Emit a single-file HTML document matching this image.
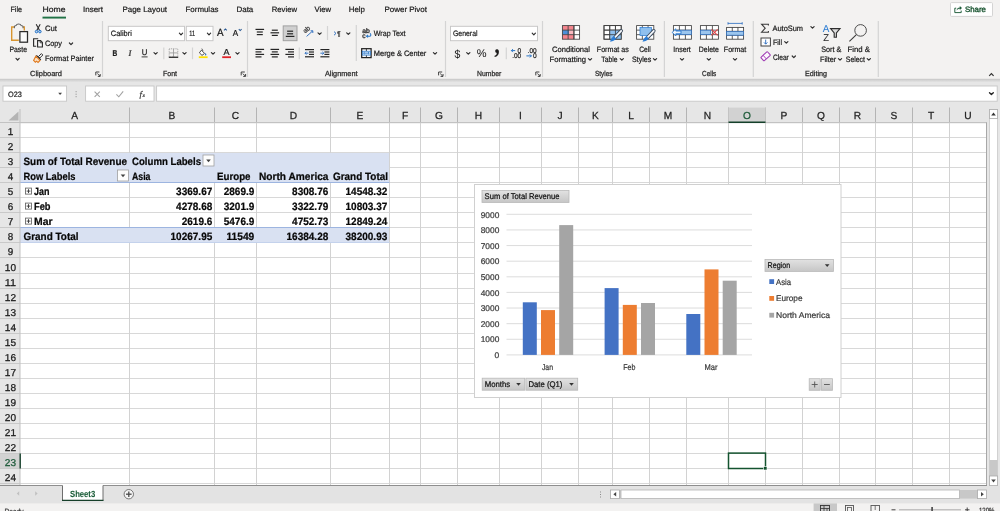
<!DOCTYPE html>
<html lang="en"><head><meta charset="utf-8"><title>Excel - PivotChart</title>
<style>
html,body{margin:0;padding:0;background:#fff;overflow:hidden}
svg{display:block;will-change:transform;font-family:'Liberation Sans', sans-serif;}
text{white-space:pre}
</style></head><body>
<svg width="1000" height="511" viewBox="0 0 1000 511" font-family="'Liberation Sans', sans-serif" text-rendering="geometricPrecision">
<rect x="0" y="0" width="1000" height="511" fill="#ffffff"/>
<rect x="0" y="0" width="1000" height="79.5" fill="#f3f2f1"/>
<rect x="0" y="79.5" width="1000" height="44" fill="#e6e6e6"/>
<linearGradient id="shd" x1="0" y1="0" x2="0" y2="1"><stop offset="0" stop-color="#c4c4c4"/><stop offset="0.35" stop-color="#d2d2d2"/><stop offset="1" stop-color="#e6e6e6"/></linearGradient>
<rect x="0" y="78.8" width="1000" height="3.6" fill="url(#shd)"/>
<rect x="0" y="107" width="987" height="15.5" fill="#e6e6e6"/>
<rect x="0" y="122.5" width="20" height="363.0" fill="#e6e6e6"/>
<rect x="20" y="152.5" width="369.5" height="30.0" fill="#d9e1f2"/>
<rect x="20" y="227.5" width="369.5" height="15.0" fill="#d9e1f2"/>
<line x1="20" y1="137.5" x2="986.5" y2="137.5" stroke="#d8d8d8" stroke-width="1.0" />
<line x1="0" y1="137.5" x2="20" y2="137.5" stroke="#c9c9c9" stroke-width="1.0" />
<line x1="20" y1="152.5" x2="986.5" y2="152.5" stroke="#d8d8d8" stroke-width="1.0" />
<line x1="0" y1="152.5" x2="20" y2="152.5" stroke="#c9c9c9" stroke-width="1.0" />
<line x1="389.5" y1="167.5" x2="986.5" y2="167.5" stroke="#d8d8d8" stroke-width="1.0" />
<line x1="0" y1="167.5" x2="20" y2="167.5" stroke="#c9c9c9" stroke-width="1.0" />
<line x1="20" y1="182.5" x2="986.5" y2="182.5" stroke="#d8d8d8" stroke-width="1.0" />
<line x1="0" y1="182.5" x2="20" y2="182.5" stroke="#c9c9c9" stroke-width="1.0" />
<line x1="20" y1="197.5" x2="986.5" y2="197.5" stroke="#d8d8d8" stroke-width="1.0" />
<line x1="0" y1="197.5" x2="20" y2="197.5" stroke="#c9c9c9" stroke-width="1.0" />
<line x1="20" y1="212.5" x2="986.5" y2="212.5" stroke="#d8d8d8" stroke-width="1.0" />
<line x1="0" y1="212.5" x2="20" y2="212.5" stroke="#c9c9c9" stroke-width="1.0" />
<line x1="20" y1="227.5" x2="986.5" y2="227.5" stroke="#d8d8d8" stroke-width="1.0" />
<line x1="0" y1="227.5" x2="20" y2="227.5" stroke="#c9c9c9" stroke-width="1.0" />
<line x1="20" y1="242.5" x2="986.5" y2="242.5" stroke="#d8d8d8" stroke-width="1.0" />
<line x1="0" y1="242.5" x2="20" y2="242.5" stroke="#c9c9c9" stroke-width="1.0" />
<line x1="20" y1="257.5" x2="986.5" y2="257.5" stroke="#d8d8d8" stroke-width="1.0" />
<line x1="0" y1="257.5" x2="20" y2="257.5" stroke="#c9c9c9" stroke-width="1.0" />
<line x1="20" y1="273.5" x2="986.5" y2="273.5" stroke="#d8d8d8" stroke-width="1.0" />
<line x1="0" y1="273.5" x2="20" y2="273.5" stroke="#c9c9c9" stroke-width="1.0" />
<line x1="20" y1="288.5" x2="986.5" y2="288.5" stroke="#d8d8d8" stroke-width="1.0" />
<line x1="0" y1="288.5" x2="20" y2="288.5" stroke="#c9c9c9" stroke-width="1.0" />
<line x1="20" y1="303.5" x2="986.5" y2="303.5" stroke="#d8d8d8" stroke-width="1.0" />
<line x1="0" y1="303.5" x2="20" y2="303.5" stroke="#c9c9c9" stroke-width="1.0" />
<line x1="20" y1="318.5" x2="986.5" y2="318.5" stroke="#d8d8d8" stroke-width="1.0" />
<line x1="0" y1="318.5" x2="20" y2="318.5" stroke="#c9c9c9" stroke-width="1.0" />
<line x1="20" y1="333.5" x2="986.5" y2="333.5" stroke="#d8d8d8" stroke-width="1.0" />
<line x1="0" y1="333.5" x2="20" y2="333.5" stroke="#c9c9c9" stroke-width="1.0" />
<line x1="20" y1="348.5" x2="986.5" y2="348.5" stroke="#d8d8d8" stroke-width="1.0" />
<line x1="0" y1="348.5" x2="20" y2="348.5" stroke="#c9c9c9" stroke-width="1.0" />
<line x1="20" y1="363.5" x2="986.5" y2="363.5" stroke="#d8d8d8" stroke-width="1.0" />
<line x1="0" y1="363.5" x2="20" y2="363.5" stroke="#c9c9c9" stroke-width="1.0" />
<line x1="20" y1="378.5" x2="986.5" y2="378.5" stroke="#d8d8d8" stroke-width="1.0" />
<line x1="0" y1="378.5" x2="20" y2="378.5" stroke="#c9c9c9" stroke-width="1.0" />
<line x1="20" y1="393.5" x2="986.5" y2="393.5" stroke="#d8d8d8" stroke-width="1.0" />
<line x1="0" y1="393.5" x2="20" y2="393.5" stroke="#c9c9c9" stroke-width="1.0" />
<line x1="20" y1="408.5" x2="986.5" y2="408.5" stroke="#d8d8d8" stroke-width="1.0" />
<line x1="0" y1="408.5" x2="20" y2="408.5" stroke="#c9c9c9" stroke-width="1.0" />
<line x1="20" y1="423.5" x2="986.5" y2="423.5" stroke="#d8d8d8" stroke-width="1.0" />
<line x1="0" y1="423.5" x2="20" y2="423.5" stroke="#c9c9c9" stroke-width="1.0" />
<line x1="20" y1="438.5" x2="986.5" y2="438.5" stroke="#d8d8d8" stroke-width="1.0" />
<line x1="0" y1="438.5" x2="20" y2="438.5" stroke="#c9c9c9" stroke-width="1.0" />
<line x1="20" y1="453.5" x2="986.5" y2="453.5" stroke="#d8d8d8" stroke-width="1.0" />
<line x1="0" y1="453.5" x2="20" y2="453.5" stroke="#c9c9c9" stroke-width="1.0" />
<line x1="20" y1="468.5" x2="986.5" y2="468.5" stroke="#d8d8d8" stroke-width="1.0" />
<line x1="0" y1="468.5" x2="20" y2="468.5" stroke="#c9c9c9" stroke-width="1.0" />
<line x1="20" y1="483.5" x2="986.5" y2="483.5" stroke="#d8d8d8" stroke-width="1.0" />
<line x1="0" y1="483.5" x2="20" y2="483.5" stroke="#c9c9c9" stroke-width="1.0" />
<line x1="129.5" y1="122.5" x2="129.5" y2="485.5" stroke="#d2d2d2" stroke-width="1.0" />
<line x1="214.5" y1="122.5" x2="214.5" y2="485.5" stroke="#d2d2d2" stroke-width="1.0" />
<line x1="256.5" y1="122.5" x2="256.5" y2="485.5" stroke="#d2d2d2" stroke-width="1.0" />
<line x1="330.5" y1="122.5" x2="330.5" y2="485.5" stroke="#d2d2d2" stroke-width="1.0" />
<line x1="389.5" y1="122.5" x2="389.5" y2="485.5" stroke="#d2d2d2" stroke-width="1.0" />
<line x1="420.5" y1="122.5" x2="420.5" y2="485.5" stroke="#d2d2d2" stroke-width="1.0" />
<line x1="457.5" y1="122.5" x2="457.5" y2="485.5" stroke="#d2d2d2" stroke-width="1.0" />
<line x1="499.5" y1="122.5" x2="499.5" y2="485.5" stroke="#d2d2d2" stroke-width="1.0" />
<line x1="541.5" y1="122.5" x2="541.5" y2="485.5" stroke="#d2d2d2" stroke-width="1.0" />
<line x1="578.5" y1="122.5" x2="578.5" y2="485.5" stroke="#d2d2d2" stroke-width="1.0" />
<line x1="612.5" y1="122.5" x2="612.5" y2="485.5" stroke="#d2d2d2" stroke-width="1.0" />
<line x1="649.5" y1="122.5" x2="649.5" y2="485.5" stroke="#d2d2d2" stroke-width="1.0" />
<line x1="686.5" y1="122.5" x2="686.5" y2="485.5" stroke="#d2d2d2" stroke-width="1.0" />
<line x1="728.5" y1="122.5" x2="728.5" y2="485.5" stroke="#d2d2d2" stroke-width="1.0" />
<line x1="765.5" y1="122.5" x2="765.5" y2="485.5" stroke="#d2d2d2" stroke-width="1.0" />
<line x1="802.5" y1="122.5" x2="802.5" y2="485.5" stroke="#d2d2d2" stroke-width="1.0" />
<line x1="839.5" y1="122.5" x2="839.5" y2="485.5" stroke="#d2d2d2" stroke-width="1.0" />
<line x1="875.5" y1="122.5" x2="875.5" y2="485.5" stroke="#d2d2d2" stroke-width="1.0" />
<line x1="912.5" y1="122.5" x2="912.5" y2="485.5" stroke="#d2d2d2" stroke-width="1.0" />
<line x1="949.5" y1="122.5" x2="949.5" y2="485.5" stroke="#d2d2d2" stroke-width="1.0" />
<rect x="20.5" y="153.0" width="368.5" height="29.0" fill="#d9e1f2"/>
<rect x="20.5" y="228.0" width="368.5" height="14.0" fill="#d9e1f2"/>
<line x1="20" y1="182.5" x2="389.5" y2="182.5" stroke="#9db5e0" stroke-width="1.0" />
<line x1="20" y1="227.5" x2="389.5" y2="227.5" stroke="#9db5e0" stroke-width="1.0" />
<line x1="20" y1="242.5" x2="389.5" y2="242.5" stroke="#c4d2ec" stroke-width="1.0" />
<line x1="129.5" y1="107.5" x2="129.5" y2="122.5" stroke="#b4b4b4" stroke-width="1.0" />
<line x1="214.5" y1="107.5" x2="214.5" y2="122.5" stroke="#b4b4b4" stroke-width="1.0" />
<line x1="256.5" y1="107.5" x2="256.5" y2="122.5" stroke="#b4b4b4" stroke-width="1.0" />
<line x1="330.5" y1="107.5" x2="330.5" y2="122.5" stroke="#b4b4b4" stroke-width="1.0" />
<line x1="389.5" y1="107.5" x2="389.5" y2="122.5" stroke="#b4b4b4" stroke-width="1.0" />
<line x1="420.5" y1="107.5" x2="420.5" y2="122.5" stroke="#b4b4b4" stroke-width="1.0" />
<line x1="457.5" y1="107.5" x2="457.5" y2="122.5" stroke="#b4b4b4" stroke-width="1.0" />
<line x1="499.5" y1="107.5" x2="499.5" y2="122.5" stroke="#b4b4b4" stroke-width="1.0" />
<line x1="541.5" y1="107.5" x2="541.5" y2="122.5" stroke="#b4b4b4" stroke-width="1.0" />
<line x1="578.5" y1="107.5" x2="578.5" y2="122.5" stroke="#b4b4b4" stroke-width="1.0" />
<line x1="612.5" y1="107.5" x2="612.5" y2="122.5" stroke="#b4b4b4" stroke-width="1.0" />
<line x1="649.5" y1="107.5" x2="649.5" y2="122.5" stroke="#b4b4b4" stroke-width="1.0" />
<line x1="686.5" y1="107.5" x2="686.5" y2="122.5" stroke="#b4b4b4" stroke-width="1.0" />
<line x1="728.5" y1="107.5" x2="728.5" y2="122.5" stroke="#b4b4b4" stroke-width="1.0" />
<line x1="765.5" y1="107.5" x2="765.5" y2="122.5" stroke="#b4b4b4" stroke-width="1.0" />
<line x1="802.5" y1="107.5" x2="802.5" y2="122.5" stroke="#b4b4b4" stroke-width="1.0" />
<line x1="839.5" y1="107.5" x2="839.5" y2="122.5" stroke="#b4b4b4" stroke-width="1.0" />
<line x1="875.5" y1="107.5" x2="875.5" y2="122.5" stroke="#b4b4b4" stroke-width="1.0" />
<line x1="912.5" y1="107.5" x2="912.5" y2="122.5" stroke="#b4b4b4" stroke-width="1.0" />
<line x1="949.5" y1="107.5" x2="949.5" y2="122.5" stroke="#b4b4b4" stroke-width="1.0" />
<line x1="20" y1="109" x2="20" y2="122.5" stroke="#bdbdbd" stroke-width="1.0" />
<line x1="0" y1="122.5" x2="987" y2="122.5" stroke="#c2c2c2" stroke-width="1.0" />
<line x1="20" y1="122.5" x2="20" y2="485.5" stroke="#c2c2c2" stroke-width="1.0" />
<rect x="728.5" y="107.6" width="37" height="14.4" fill="#d2d2d2"/>
<rect x="0" y="454.0" width="19.5" height="14.0" fill="#d2d2d2"/>
<path d="M18.5,111.5 L18.5,120.5 L8.5,120.5 Z" fill="#b4b4b4"/>
<text x="74.75" y="118.8" font-size="10.2" fill="#222222" stroke="#222222" stroke-width="0.25" text-anchor="middle">A</text>
<text x="172.0" y="118.8" font-size="10.2" fill="#222222" stroke="#222222" stroke-width="0.25" text-anchor="middle">B</text>
<text x="235.5" y="118.8" font-size="10.2" fill="#222222" stroke="#222222" stroke-width="0.25" text-anchor="middle">C</text>
<text x="293.5" y="118.8" font-size="10.2" fill="#222222" stroke="#222222" stroke-width="0.25" text-anchor="middle">D</text>
<text x="360.0" y="118.8" font-size="10.2" fill="#222222" stroke="#222222" stroke-width="0.25" text-anchor="middle">E</text>
<text x="405.0" y="118.8" font-size="10.2" fill="#222222" stroke="#222222" stroke-width="0.25" text-anchor="middle">F</text>
<text x="439.0" y="118.8" font-size="10.2" fill="#222222" stroke="#222222" stroke-width="0.25" text-anchor="middle">G</text>
<text x="478.5" y="118.8" font-size="10.2" fill="#222222" stroke="#222222" stroke-width="0.25" text-anchor="middle">H</text>
<text x="520.5" y="118.8" font-size="10.2" fill="#222222" stroke="#222222" stroke-width="0.25" text-anchor="middle">I</text>
<text x="560.0" y="118.8" font-size="10.2" fill="#222222" stroke="#222222" stroke-width="0.25" text-anchor="middle">J</text>
<text x="595.5" y="118.8" font-size="10.2" fill="#222222" stroke="#222222" stroke-width="0.25" text-anchor="middle">K</text>
<text x="631.0" y="118.8" font-size="10.2" fill="#222222" stroke="#222222" stroke-width="0.25" text-anchor="middle">L</text>
<text x="668.0" y="118.8" font-size="10.2" fill="#222222" stroke="#222222" stroke-width="0.25" text-anchor="middle">M</text>
<text x="707.5" y="118.8" font-size="10.2" fill="#222222" stroke="#222222" stroke-width="0.25" text-anchor="middle">N</text>
<text x="747.0" y="118.8" font-size="10.2" fill="#1d5a39" stroke="#1d5a39" stroke-width="0.25" text-anchor="middle">O</text>
<text x="784.0" y="118.8" font-size="10.2" fill="#222222" stroke="#222222" stroke-width="0.25" text-anchor="middle">P</text>
<text x="821.0" y="118.8" font-size="10.2" fill="#222222" stroke="#222222" stroke-width="0.25" text-anchor="middle">Q</text>
<text x="857.5" y="118.8" font-size="10.2" fill="#222222" stroke="#222222" stroke-width="0.25" text-anchor="middle">R</text>
<text x="894.0" y="118.8" font-size="10.2" fill="#222222" stroke="#222222" stroke-width="0.25" text-anchor="middle">S</text>
<text x="931.0" y="118.8" font-size="10.2" fill="#222222" stroke="#222222" stroke-width="0.25" text-anchor="middle">T</text>
<text x="968.0" y="118.8" font-size="10.2" fill="#222222" stroke="#222222" stroke-width="0.25" text-anchor="middle">U</text>
<text x="7.65" y="134.8" font-size="10" fill="#1e1e1e" stroke="#1e1e1e" stroke-width="0.28" textLength="5.5" lengthAdjust="spacingAndGlyphs">1</text>
<text x="7.65" y="149.8" font-size="10" fill="#1e1e1e" stroke="#1e1e1e" stroke-width="0.28" textLength="5.5" lengthAdjust="spacingAndGlyphs">2</text>
<text x="7.65" y="164.8" font-size="10" fill="#1e1e1e" stroke="#1e1e1e" stroke-width="0.28" textLength="5.5" lengthAdjust="spacingAndGlyphs">3</text>
<text x="7.65" y="179.8" font-size="10" fill="#1e1e1e" stroke="#1e1e1e" stroke-width="0.28" textLength="5.5" lengthAdjust="spacingAndGlyphs">4</text>
<text x="7.65" y="194.8" font-size="10" fill="#1e1e1e" stroke="#1e1e1e" stroke-width="0.28" textLength="5.5" lengthAdjust="spacingAndGlyphs">5</text>
<text x="7.65" y="209.8" font-size="10" fill="#1e1e1e" stroke="#1e1e1e" stroke-width="0.28" textLength="5.5" lengthAdjust="spacingAndGlyphs">6</text>
<text x="7.65" y="224.8" font-size="10" fill="#1e1e1e" stroke="#1e1e1e" stroke-width="0.28" textLength="5.5" lengthAdjust="spacingAndGlyphs">7</text>
<text x="7.65" y="239.8" font-size="10" fill="#1e1e1e" stroke="#1e1e1e" stroke-width="0.28" textLength="5.5" lengthAdjust="spacingAndGlyphs">8</text>
<text x="7.65" y="254.8" font-size="10" fill="#1e1e1e" stroke="#1e1e1e" stroke-width="0.28" textLength="5.5" lengthAdjust="spacingAndGlyphs">9</text>
<text x="4.800000000000001" y="270.8" font-size="10" fill="#1e1e1e" stroke="#1e1e1e" stroke-width="0.28" textLength="11.2" lengthAdjust="spacingAndGlyphs">10</text>
<text x="4.800000000000001" y="285.8" font-size="10" fill="#1e1e1e" stroke="#1e1e1e" stroke-width="0.28" textLength="11.2" lengthAdjust="spacingAndGlyphs">11</text>
<text x="4.800000000000001" y="300.8" font-size="10" fill="#1e1e1e" stroke="#1e1e1e" stroke-width="0.28" textLength="11.2" lengthAdjust="spacingAndGlyphs">12</text>
<text x="4.800000000000001" y="315.8" font-size="10" fill="#1e1e1e" stroke="#1e1e1e" stroke-width="0.28" textLength="11.2" lengthAdjust="spacingAndGlyphs">13</text>
<text x="4.800000000000001" y="330.8" font-size="10" fill="#1e1e1e" stroke="#1e1e1e" stroke-width="0.28" textLength="11.2" lengthAdjust="spacingAndGlyphs">14</text>
<text x="4.800000000000001" y="345.8" font-size="10" fill="#1e1e1e" stroke="#1e1e1e" stroke-width="0.28" textLength="11.2" lengthAdjust="spacingAndGlyphs">15</text>
<text x="4.800000000000001" y="360.8" font-size="10" fill="#1e1e1e" stroke="#1e1e1e" stroke-width="0.28" textLength="11.2" lengthAdjust="spacingAndGlyphs">16</text>
<text x="4.800000000000001" y="375.8" font-size="10" fill="#1e1e1e" stroke="#1e1e1e" stroke-width="0.28" textLength="11.2" lengthAdjust="spacingAndGlyphs">17</text>
<text x="4.800000000000001" y="390.8" font-size="10" fill="#1e1e1e" stroke="#1e1e1e" stroke-width="0.28" textLength="11.2" lengthAdjust="spacingAndGlyphs">18</text>
<text x="4.800000000000001" y="405.8" font-size="10" fill="#1e1e1e" stroke="#1e1e1e" stroke-width="0.28" textLength="11.2" lengthAdjust="spacingAndGlyphs">19</text>
<text x="4.800000000000001" y="420.8" font-size="10" fill="#1e1e1e" stroke="#1e1e1e" stroke-width="0.28" textLength="11.2" lengthAdjust="spacingAndGlyphs">20</text>
<text x="4.800000000000001" y="435.8" font-size="10" fill="#1e1e1e" stroke="#1e1e1e" stroke-width="0.28" textLength="11.2" lengthAdjust="spacingAndGlyphs">21</text>
<text x="4.800000000000001" y="450.8" font-size="10" fill="#1e1e1e" stroke="#1e1e1e" stroke-width="0.28" textLength="11.2" lengthAdjust="spacingAndGlyphs">22</text>
<text x="4.800000000000001" y="465.8" font-size="10" fill="#1d5a39" stroke="#1d5a39" stroke-width="0.28" textLength="11.2" lengthAdjust="spacingAndGlyphs">23</text>
<text x="4.800000000000001" y="480.8" font-size="10" fill="#1e1e1e" stroke="#1e1e1e" stroke-width="0.28" textLength="11.2" lengthAdjust="spacingAndGlyphs">24</text>
<line x1="728.5" y1="122.3" x2="765.5" y2="122.3" stroke="#15402a" stroke-width="1.5" />
<line x1="20.2" y1="453.5" x2="20.2" y2="468.5" stroke="#15402a" stroke-width="1.4" />
<rect x="728.5" y="453.1" width="37" height="15.4" fill="none" stroke="#14532f" stroke-width="1.5"/>
<rect x="763.6" y="466.6" width="3.4" height="3.4" fill="#14532f" stroke="#ffffff" stroke-width="0.6"/>
<line x1="986.5" y1="122.5" x2="986.5" y2="485.5" stroke="#a8a8a8" stroke-width="1.0" />
<text x="23.5" y="164.7" font-size="10.6" fill="#080808" stroke="#080808" stroke-width="0.22" textLength="103.5" lengthAdjust="spacingAndGlyphs" font-weight="bold">Sum of Total Revenue</text>
<text x="132.0" y="164.7" font-size="10.6" fill="#080808" stroke="#080808" stroke-width="0.22" textLength="69" lengthAdjust="spacingAndGlyphs" font-weight="bold">Column Labels</text>
<text x="23.5" y="179.7" font-size="10.6" fill="#080808" stroke="#080808" stroke-width="0.22" textLength="52" lengthAdjust="spacingAndGlyphs" font-weight="bold">Row Labels</text>
<text x="132.0" y="179.7" font-size="10.6" fill="#080808" stroke="#080808" stroke-width="0.22" textLength="18.5" lengthAdjust="spacingAndGlyphs" font-weight="bold">Asia</text>
<text x="217.0" y="179.7" font-size="10.6" fill="#080808" stroke="#080808" stroke-width="0.22" textLength="33.5" lengthAdjust="spacingAndGlyphs" font-weight="bold">Europe</text>
<text x="259.0" y="179.7" font-size="10.6" fill="#080808" stroke="#080808" stroke-width="0.22" textLength="69.5" lengthAdjust="spacingAndGlyphs" font-weight="bold">North America</text>
<text x="333.0" y="179.7" font-size="10.6" fill="#080808" stroke="#080808" stroke-width="0.22" textLength="55" lengthAdjust="spacingAndGlyphs" font-weight="bold">Grand Total</text>
<text x="34" y="194.7" font-size="10.6" fill="#080808" stroke="#080808" stroke-width="0.22" textLength="15.5" lengthAdjust="spacingAndGlyphs" font-weight="bold">Jan</text>
<rect x="25.5" y="188.1" width="6" height="6" fill="#ffffff" stroke="#6a6a6a" stroke-width="0.9"/>
<line x1="26.6" y1="191.1" x2="30.4" y2="191.1" stroke="#333" stroke-width="0.9" />
<line x1="28.5" y1="189.2" x2="28.5" y2="193.0" stroke="#333" stroke-width="0.9" />
<text x="34" y="209.7" font-size="10.6" fill="#080808" stroke="#080808" stroke-width="0.22" textLength="16.5" lengthAdjust="spacingAndGlyphs" font-weight="bold">Feb</text>
<rect x="25.5" y="203.1" width="6" height="6" fill="#ffffff" stroke="#6a6a6a" stroke-width="0.9"/>
<line x1="26.6" y1="206.1" x2="30.4" y2="206.1" stroke="#333" stroke-width="0.9" />
<line x1="28.5" y1="204.2" x2="28.5" y2="208.0" stroke="#333" stroke-width="0.9" />
<text x="34" y="224.7" font-size="10.6" fill="#080808" stroke="#080808" stroke-width="0.22" textLength="18.5" lengthAdjust="spacingAndGlyphs" font-weight="bold">Mar</text>
<rect x="25.5" y="218.1" width="6" height="6" fill="#ffffff" stroke="#6a6a6a" stroke-width="0.9"/>
<line x1="26.6" y1="221.1" x2="30.4" y2="221.1" stroke="#333" stroke-width="0.9" />
<line x1="28.5" y1="219.2" x2="28.5" y2="223.0" stroke="#333" stroke-width="0.9" />
<text x="23.5" y="239.7" font-size="10.6" fill="#080808" stroke="#080808" stroke-width="0.22" textLength="55" lengthAdjust="spacingAndGlyphs" font-weight="bold">Grand Total</text>
<text x="176.12" y="194.7" font-size="10.6" fill="#080808" stroke="#080808" stroke-width="0.22" textLength="36.18" lengthAdjust="spacingAndGlyphs" font-weight="bold">3369.67</text>
<text x="223.70000000000002" y="194.7" font-size="10.6" fill="#080808" stroke="#080808" stroke-width="0.22" textLength="30.6" lengthAdjust="spacingAndGlyphs" font-weight="bold">2869.9</text>
<text x="292.12" y="194.7" font-size="10.6" fill="#080808" stroke="#080808" stroke-width="0.22" textLength="36.18" lengthAdjust="spacingAndGlyphs" font-weight="bold">8308.76</text>
<text x="345.54" y="194.7" font-size="10.6" fill="#080808" stroke="#080808" stroke-width="0.22" textLength="41.76" lengthAdjust="spacingAndGlyphs" font-weight="bold">14548.32</text>
<text x="176.12" y="209.7" font-size="10.6" fill="#080808" stroke="#080808" stroke-width="0.22" textLength="36.18" lengthAdjust="spacingAndGlyphs" font-weight="bold">4278.68</text>
<text x="223.70000000000002" y="209.7" font-size="10.6" fill="#080808" stroke="#080808" stroke-width="0.22" textLength="30.6" lengthAdjust="spacingAndGlyphs" font-weight="bold">3201.9</text>
<text x="292.12" y="209.7" font-size="10.6" fill="#080808" stroke="#080808" stroke-width="0.22" textLength="36.18" lengthAdjust="spacingAndGlyphs" font-weight="bold">3322.79</text>
<text x="345.54" y="209.7" font-size="10.6" fill="#080808" stroke="#080808" stroke-width="0.22" textLength="41.76" lengthAdjust="spacingAndGlyphs" font-weight="bold">10803.37</text>
<text x="181.70000000000002" y="224.7" font-size="10.6" fill="#080808" stroke="#080808" stroke-width="0.22" textLength="30.6" lengthAdjust="spacingAndGlyphs" font-weight="bold">2619.6</text>
<text x="223.70000000000002" y="224.7" font-size="10.6" fill="#080808" stroke="#080808" stroke-width="0.22" textLength="30.6" lengthAdjust="spacingAndGlyphs" font-weight="bold">5476.9</text>
<text x="292.12" y="224.7" font-size="10.6" fill="#080808" stroke="#080808" stroke-width="0.22" textLength="36.18" lengthAdjust="spacingAndGlyphs" font-weight="bold">4752.73</text>
<text x="345.54" y="224.7" font-size="10.6" fill="#080808" stroke="#080808" stroke-width="0.22" textLength="41.76" lengthAdjust="spacingAndGlyphs" font-weight="bold">12849.24</text>
<text x="170.54000000000002" y="239.7" font-size="10.6" fill="#080808" stroke="#080808" stroke-width="0.22" textLength="41.76" lengthAdjust="spacingAndGlyphs" font-weight="bold">10267.95</text>
<text x="226.4" y="239.7" font-size="10.6" fill="#080808" stroke="#080808" stroke-width="0.22" textLength="27.9" lengthAdjust="spacingAndGlyphs" font-weight="bold">11549</text>
<text x="286.54" y="239.7" font-size="10.6" fill="#080808" stroke="#080808" stroke-width="0.22" textLength="41.76" lengthAdjust="spacingAndGlyphs" font-weight="bold">16384.28</text>
<text x="345.54" y="239.7" font-size="10.6" fill="#080808" stroke="#080808" stroke-width="0.22" textLength="41.76" lengthAdjust="spacingAndGlyphs" font-weight="bold">38200.93</text>
<rect x="203" y="155.0" width="11" height="11" fill="#fdfdfd" stroke="#a0a0a0" stroke-width="0.8"/>
<path d="M206.2,159.6 L210.8,159.6 L208.5,162.2 Z" fill="#404040"/>
<rect x="117.5" y="170.0" width="11" height="11" fill="#fdfdfd" stroke="#a0a0a0" stroke-width="0.8"/>
<path d="M120.7,174.6 L125.3,174.6 L123.0,177.2 Z" fill="#404040"/>
<rect x="474.5" y="184.5" width="366.5" height="213" fill="#ffffff" stroke="#d0d0d0" stroke-width="1.0"/>
<line x1="506.5" y1="354.9" x2="752" y2="354.9" stroke="#d3d3d3" stroke-width="0.8" />
<text x="494.6" y="358.09999999999997" font-size="8.3" fill="#3a3a3a" stroke="#3a3a3a" stroke-width="0.22" textLength="4.7" lengthAdjust="spacingAndGlyphs">0</text>
<line x1="506.5" y1="339.28" x2="752" y2="339.28" stroke="#d3d3d3" stroke-width="0.8" />
<text x="480.7" y="342.47999999999996" font-size="8.3" fill="#3a3a3a" stroke="#3a3a3a" stroke-width="0.22" textLength="18.6" lengthAdjust="spacingAndGlyphs">1000</text>
<line x1="506.5" y1="323.66" x2="752" y2="323.66" stroke="#d3d3d3" stroke-width="0.8" />
<text x="480.7" y="326.86" font-size="8.3" fill="#3a3a3a" stroke="#3a3a3a" stroke-width="0.22" textLength="18.6" lengthAdjust="spacingAndGlyphs">2000</text>
<line x1="506.5" y1="308.04" x2="752" y2="308.04" stroke="#d3d3d3" stroke-width="0.8" />
<text x="480.7" y="311.24" font-size="8.3" fill="#3a3a3a" stroke="#3a3a3a" stroke-width="0.22" textLength="18.6" lengthAdjust="spacingAndGlyphs">3000</text>
<line x1="506.5" y1="292.42" x2="752" y2="292.42" stroke="#d3d3d3" stroke-width="0.8" />
<text x="480.7" y="295.62" font-size="8.3" fill="#3a3a3a" stroke="#3a3a3a" stroke-width="0.22" textLength="18.6" lengthAdjust="spacingAndGlyphs">4000</text>
<line x1="506.5" y1="276.8" x2="752" y2="276.8" stroke="#d3d3d3" stroke-width="0.8" />
<text x="480.7" y="280.0" font-size="8.3" fill="#3a3a3a" stroke="#3a3a3a" stroke-width="0.22" textLength="18.6" lengthAdjust="spacingAndGlyphs">5000</text>
<line x1="506.5" y1="261.18" x2="752" y2="261.18" stroke="#d3d3d3" stroke-width="0.8" />
<text x="480.7" y="264.38" font-size="8.3" fill="#3a3a3a" stroke="#3a3a3a" stroke-width="0.22" textLength="18.6" lengthAdjust="spacingAndGlyphs">6000</text>
<line x1="506.5" y1="245.56" x2="752" y2="245.56" stroke="#d3d3d3" stroke-width="0.8" />
<text x="480.7" y="248.76" font-size="8.3" fill="#3a3a3a" stroke="#3a3a3a" stroke-width="0.22" textLength="18.6" lengthAdjust="spacingAndGlyphs">7000</text>
<line x1="506.5" y1="229.94" x2="752" y2="229.94" stroke="#d3d3d3" stroke-width="0.8" />
<text x="480.7" y="233.14" font-size="8.3" fill="#3a3a3a" stroke="#3a3a3a" stroke-width="0.22" textLength="18.6" lengthAdjust="spacingAndGlyphs">8000</text>
<line x1="506.5" y1="214.32" x2="752" y2="214.32" stroke="#d3d3d3" stroke-width="0.8" />
<text x="480.7" y="217.51999999999998" font-size="8.3" fill="#3a3a3a" stroke="#3a3a3a" stroke-width="0.22" textLength="18.6" lengthAdjust="spacingAndGlyphs">9000</text>
<rect x="522.8" y="302.3" width="14" height="52.6" fill="#4472c4"/>
<rect x="604.6" y="288.1" width="14" height="66.8" fill="#4472c4"/>
<rect x="686.3" y="314.0" width="14" height="40.9" fill="#4472c4"/>
<rect x="541.0" y="310.1" width="14" height="44.8" fill="#ed7d31"/>
<rect x="622.8" y="304.9" width="14" height="50.0" fill="#ed7d31"/>
<rect x="704.5" y="269.4" width="14" height="85.5" fill="#ed7d31"/>
<rect x="559.2" y="225.1" width="14" height="129.8" fill="#a5a5a5"/>
<rect x="641.0" y="303.0" width="14" height="51.9" fill="#a5a5a5"/>
<rect x="722.7" y="280.7" width="14" height="74.2" fill="#a5a5a5"/>
<text x="541.875" y="369.6" font-size="8.3" fill="#3a3a3a" stroke="#3a3a3a" stroke-width="0.22" textLength="11.2" lengthAdjust="spacingAndGlyphs">Jan</text>
<text x="623.125" y="369.6" font-size="8.3" fill="#3a3a3a" stroke="#3a3a3a" stroke-width="0.22" textLength="12.2" lengthAdjust="spacingAndGlyphs">Feb</text>
<text x="704.475" y="369.6" font-size="8.3" fill="#3a3a3a" stroke="#3a3a3a" stroke-width="0.22" textLength="13" lengthAdjust="spacingAndGlyphs">Mar</text>
<linearGradient id="fb" x1="0" y1="0" x2="0" y2="1"><stop offset="0" stop-color="#e2e2e2"/><stop offset="1" stop-color="#c6c6c6"/></linearGradient>
<rect x="482" y="190.5" width="87" height="12" fill="url(#fb)" stroke="#b8b8b8" stroke-width="0.8"/>
<text x="484.6" y="199.4" font-size="8.2" fill="#111" stroke="#111" stroke-width="0.22" textLength="75" lengthAdjust="spacingAndGlyphs">Sum of Total Revenue</text>
<rect x="482.2" y="378.2" width="42.5" height="12" fill="url(#fb)" stroke="#b8b8b8" stroke-width="0.8"/>
<text x="484.7" y="387.09999999999997" font-size="8.2" fill="#111" stroke="#111" stroke-width="0.22" textLength="25.5" lengthAdjust="spacingAndGlyphs">Months</text>
<path d="M516.2,383.09999999999997 L520.8,383.09999999999997 L518.5,385.8 Z" fill="#333"/>
<rect x="525.9" y="378.2" width="51.8" height="12" fill="url(#fb)" stroke="#b8b8b8" stroke-width="0.8"/>
<text x="528.4" y="387.09999999999997" font-size="8.2" fill="#111" stroke="#111" stroke-width="0.22" textLength="34" lengthAdjust="spacingAndGlyphs">Date (Q1)</text>
<path d="M569.1999999999999,383.09999999999997 L573.7999999999998,383.09999999999997 L571.4999999999999,385.8 Z" fill="#333"/>
<rect x="765" y="259.4" width="68.4" height="12" fill="url(#fb)" stroke="#b8b8b8" stroke-width="0.8"/>
<text x="767.6" y="268.29999999999995" font-size="8.2" fill="#111" stroke="#111" stroke-width="0.22" textLength="22.5" lengthAdjust="spacingAndGlyphs">Region</text>
<path d="M824.9,264.29999999999995 L829.4999999999999,264.29999999999995 L827.1999999999999,267.0 Z" fill="#333"/>
<rect x="769.3" y="279.20000000000005" width="4.8" height="4.8" fill="#4472c4"/>
<text x="776" y="284.6" font-size="8.3" fill="#3a3a3a" stroke="#3a3a3a" stroke-width="0.22" textLength="15" lengthAdjust="spacingAndGlyphs">Asia</text>
<rect x="769.3" y="296.00000000000006" width="4.8" height="4.8" fill="#ed7d31"/>
<text x="776" y="301.40000000000003" font-size="8.3" fill="#3a3a3a" stroke="#3a3a3a" stroke-width="0.22" textLength="26.5" lengthAdjust="spacingAndGlyphs">Europe</text>
<rect x="769.3" y="312.80000000000007" width="4.8" height="4.8" fill="#a5a5a5"/>
<text x="776" y="318.20000000000005" font-size="8.3" fill="#3a3a3a" stroke="#3a3a3a" stroke-width="0.22" textLength="54" lengthAdjust="spacingAndGlyphs">North America</text>
<rect x="809.2" y="378.7" width="11" height="11.6" fill="url(#fb)" stroke="#b8b8b8" stroke-width="0.8"/>
<rect x="821.4" y="378.7" width="11" height="11.6" fill="url(#fb)" stroke="#b8b8b8" stroke-width="0.8"/>
<line x1="811.7" y1="384.5" x2="817.7" y2="384.5" stroke="#555" stroke-width="0.9" />
<line x1="814.7" y1="381.5" x2="814.7" y2="387.5" stroke="#555" stroke-width="0.9" />
<line x1="824" y1="384.5" x2="829.8" y2="384.5" stroke="#555" stroke-width="0.9" />
<text x="10.5" y="12.3" font-size="7.8" fill="#1c1c1c" stroke="#1c1c1c" stroke-width="0.22" textLength="11.5" lengthAdjust="spacingAndGlyphs">File</text>
<text x="42.5" y="12.3" font-size="7.8" fill="#1c1c1c" stroke="#1c1c1c" stroke-width="0.22" textLength="23" lengthAdjust="spacingAndGlyphs">Home</text>
<text x="83" y="12.3" font-size="7.8" fill="#1c1c1c" stroke="#1c1c1c" stroke-width="0.22" textLength="20" lengthAdjust="spacingAndGlyphs">Insert</text>
<text x="122.5" y="12.3" font-size="7.8" fill="#1c1c1c" stroke="#1c1c1c" stroke-width="0.22" textLength="44.5" lengthAdjust="spacingAndGlyphs">Page Layout</text>
<text x="185.5" y="12.3" font-size="7.8" fill="#1c1c1c" stroke="#1c1c1c" stroke-width="0.22" textLength="33" lengthAdjust="spacingAndGlyphs">Formulas</text>
<text x="236.5" y="12.3" font-size="7.8" fill="#1c1c1c" stroke="#1c1c1c" stroke-width="0.22" textLength="16.8" lengthAdjust="spacingAndGlyphs">Data</text>
<text x="271.8" y="12.3" font-size="7.8" fill="#1c1c1c" stroke="#1c1c1c" stroke-width="0.22" textLength="25.2" lengthAdjust="spacingAndGlyphs">Review</text>
<text x="314.5" y="12.3" font-size="7.8" fill="#1c1c1c" stroke="#1c1c1c" stroke-width="0.22" textLength="16.5" lengthAdjust="spacingAndGlyphs">View</text>
<text x="348.8" y="12.3" font-size="7.8" fill="#1c1c1c" stroke="#1c1c1c" stroke-width="0.22" textLength="16.2" lengthAdjust="spacingAndGlyphs">Help</text>
<text x="384.5" y="12.3" font-size="7.8" fill="#1c1c1c" stroke="#1c1c1c" stroke-width="0.22" textLength="42.5" lengthAdjust="spacingAndGlyphs">Power Pivot</text>
<line x1="42.5" y1="17.6" x2="66" y2="17.6" stroke="#217346" stroke-width="1.92" />
<rect x="950.5" y="2.6" width="42" height="13.8" fill="#ffffff" stroke="#d2d2d2" stroke-width="0.96" rx="1"/>
<text x="965" y="12.3" font-size="7.8" fill="#17532f" stroke="#17532f" stroke-width="0.35" textLength="21" lengthAdjust="spacingAndGlyphs">Share</text>
<path d="M956.2,8.2 L954.8,8.2 L954.8,12.6 L961.2,12.6 L961.2,10.6" fill="none" stroke="#1e5c3a" stroke-width="0.96"/>
<path d="M956.6,10.6 C956.8,8.4 958,7.4 959.8,7.4 L959.8,6 L962,8 L959.8,10 L959.8,8.7 C958.4,8.7 957.4,9.2 956.6,10.6 Z" fill="#1e5c3a"/>
<path d="M989.2,75.8 L991.4,73.6 L993.6,75.8" fill="none" stroke="#333" stroke-width="1.2"/>
<line x1="102.5" y1="21" x2="102.5" y2="77" stroke="#d4d4d4" stroke-width="1.2" />
<line x1="247.5" y1="21" x2="247.5" y2="77" stroke="#d4d4d4" stroke-width="1.2" />
<line x1="445.5" y1="21" x2="445.5" y2="77" stroke="#d4d4d4" stroke-width="1.2" />
<line x1="542.5" y1="21" x2="542.5" y2="77" stroke="#d4d4d4" stroke-width="1.2" />
<line x1="664.4" y1="21" x2="664.4" y2="77" stroke="#d4d4d4" stroke-width="1.2" />
<line x1="753.3" y1="21" x2="753.3" y2="77" stroke="#d4d4d4" stroke-width="1.2" />
<line x1="878.3" y1="21" x2="878.3" y2="77" stroke="#d4d4d4" stroke-width="1.2" />
<text x="30" y="75.8" font-size="7.4" fill="#2e2e2e" stroke="#2e2e2e" stroke-width="0.28" textLength="32" lengthAdjust="spacingAndGlyphs">Clipboard</text>
<text x="163" y="75.8" font-size="7.4" fill="#2e2e2e" stroke="#2e2e2e" stroke-width="0.28" textLength="14" lengthAdjust="spacingAndGlyphs">Font</text>
<text x="325" y="75.8" font-size="7.4" fill="#2e2e2e" stroke="#2e2e2e" stroke-width="0.28" textLength="32.5" lengthAdjust="spacingAndGlyphs">Alignment</text>
<text x="477" y="75.8" font-size="7.4" fill="#2e2e2e" stroke="#2e2e2e" stroke-width="0.28" textLength="24.3" lengthAdjust="spacingAndGlyphs">Number</text>
<text x="595" y="75.8" font-size="7.4" fill="#2e2e2e" stroke="#2e2e2e" stroke-width="0.28" textLength="17.5" lengthAdjust="spacingAndGlyphs">Styles</text>
<text x="702" y="75.8" font-size="7.4" fill="#2e2e2e" stroke="#2e2e2e" stroke-width="0.28" textLength="14.3" lengthAdjust="spacingAndGlyphs">Cells</text>
<text x="805" y="75.8" font-size="7.4" fill="#2e2e2e" stroke="#2e2e2e" stroke-width="0.28" textLength="22" lengthAdjust="spacingAndGlyphs">Editing</text>
<path d="M95.8,75.4 L95.8,72 L99.39999999999999,72" fill="none" stroke="#3a3a3a" stroke-width="0.96"/>
<path d="M97.39999999999999,73.6 L100.0,76.2 M100.2,74.0 L100.2,76.4 L97.8,76.4" fill="none" stroke="#3a3a3a" stroke-width="0.96"/>
<path d="M241.2,75.4 L241.2,72 L244.79999999999998,72" fill="none" stroke="#3a3a3a" stroke-width="0.96"/>
<path d="M242.79999999999998,73.6 L245.39999999999998,76.2 M245.6,74.0 L245.6,76.4 L243.2,76.4" fill="none" stroke="#3a3a3a" stroke-width="0.96"/>
<path d="M438.6,75.4 L438.6,72 L442.20000000000005,72" fill="none" stroke="#3a3a3a" stroke-width="0.96"/>
<path d="M440.20000000000005,73.6 L442.8,76.2 M443.0,74.0 L443.0,76.4 L440.6,76.4" fill="none" stroke="#3a3a3a" stroke-width="0.96"/>
<path d="M535.8,75.4 L535.8,72 L539.4,72" fill="none" stroke="#3a3a3a" stroke-width="0.96"/>
<path d="M537.4,73.6 L540.0,76.2 M540.1999999999999,74.0 L540.1999999999999,76.4 L537.8,76.4" fill="none" stroke="#3a3a3a" stroke-width="0.96"/>
<path d="M14.6,27 L11.7,27 L11.7,40.3 L18.8,40.3" fill="none" stroke="#d9952e" stroke-width="1.38"/>
<path d="M23,27 L24.3,27 L24.3,30.6" fill="none" stroke="#d9952e" stroke-width="1.38"/>
<path d="M14.4,28.2 L14.4,26.4 C14.4,25.6 15.6,25.8 16.2,25.4 C16.6,23.6 20.6,23.6 21,25.4 C21.6,25.8 23,25.6 23,26.4 L23,28.2" fill="#f3f2f1" stroke="#5e5e5e" stroke-width="1.02"/>
<rect x="19.9" y="31.6" width="7.6" height="10.6" fill="#fafafa" stroke="#2b2b2b" stroke-width="1.26"/>
<text x="9.5" y="51.7" font-size="7.8" fill="#1c1c1c" stroke="#1c1c1c" stroke-width="0.22" textLength="17.5" lengthAdjust="spacingAndGlyphs">Paste</text>
<path d="M16.0,58.400000000000006 L17.6,60.0 L19.200000000000003,58.400000000000006" fill="none" stroke="#303030" stroke-width="1.2" stroke-linecap="round" stroke-linejoin="round"/>
<path d="M36.2,24.2 L39.6,30.4 M40.2,24.2 L36.8,30.4" fill="none" stroke="#2b2b2b" stroke-width="1.08"/>
<circle cx="36.5" cy="31.6" r="1.25" fill="#bcd6f2" stroke="#1f6fc4" stroke-width="1"/><circle cx="39.9" cy="31.6" r="1.25" fill="#bcd6f2" stroke="#1f6fc4" stroke-width="1"/>
<text x="45" y="31.2" font-size="7.8" fill="#1c1c1c" stroke="#1c1c1c" stroke-width="0.22" textLength="12" lengthAdjust="spacingAndGlyphs">Cut</text>
<path d="M36.2,46.2 L33.6,46.2 L33.6,38.8 L38.2,38.8" fill="none" stroke="#2b2b2b" stroke-width="1.14"/>
<path d="M37.6,40.6 L40.6,40.6 L42.4,42.4 L42.4,47 L37.6,47 Z" fill="#fafafa" stroke="#2b2b2b" stroke-width="1.14"/>
<path d="M40.2,41 L40.2,42.8 L42,42.8" fill="none" stroke="#2b2b2b" stroke-width="0.84"/>
<text x="45" y="46.4" font-size="7.8" fill="#1c1c1c" stroke="#1c1c1c" stroke-width="0.22" textLength="17" lengthAdjust="spacingAndGlyphs">Copy</text>
<path d="M69.4,43.0 L71,44.599999999999994 L72.6,43.0" fill="none" stroke="#303030" stroke-width="1.2" stroke-linecap="round" stroke-linejoin="round"/>
<path d="M41.4,53.6 L42.8,55 L39.8,58 L38.4,56.6 Z" fill="#fafafa" stroke="#2b2b2b" stroke-width="0.96"/>
<path d="M36.4,55.4 L40.8,59.8" fill="none" stroke="#2b2b2b" stroke-width="1.2"/>
<path d="M35.8,56.2 L40,60.4 L38,62.4 L36.6,61.2 L35.4,62.2 L33.6,60.4 Z" fill="#fbe0c2" stroke="#e07a1f" stroke-width="1.08"/>
<text x="45" y="61.2" font-size="7.8" fill="#1c1c1c" stroke="#1c1c1c" stroke-width="0.22" textLength="49" lengthAdjust="spacingAndGlyphs">Format Painter</text>
<rect x="108.3" y="26.3" width="76.2" height="14.4" fill="#ffffff" stroke="#c6c6c6" stroke-width="0.96"/>
<text x="110.8" y="36.2" font-size="7.8" fill="#1c1c1c" stroke="#1c1c1c" stroke-width="0.22" textLength="21" lengthAdjust="spacingAndGlyphs">Calibri</text>
<path d="M179.4,33.2 L181,34.8 L182.6,33.2" fill="none" stroke="#303030" stroke-width="1.2" stroke-linecap="round" stroke-linejoin="round"/>
<rect x="186.3" y="26.3" width="26.7" height="14.4" fill="#ffffff" stroke="#c6c6c6" stroke-width="0.96"/>
<text x="189.3" y="36.2" font-size="7.8" fill="#1c1c1c" stroke="#1c1c1c" stroke-width="0.22" textLength="5.8" lengthAdjust="spacingAndGlyphs">11</text>
<path d="M207.4,33.2 L209,34.8 L210.6,33.2" fill="none" stroke="#303030" stroke-width="1.2" stroke-linecap="round" stroke-linejoin="round"/>
<text x="217" y="36.4" font-size="10.4" fill="#1c1c1c" stroke="#1c1c1c" stroke-width="0.22" textLength="6.6" lengthAdjust="spacingAndGlyphs">A</text>
<path d="M224,30.4 L225.4,29 L226.8,30.4" fill="none" stroke="#2a5a94" stroke-width="1.02"/>
<text x="232.8" y="36.4" font-size="8.6" fill="#1c1c1c" stroke="#1c1c1c" stroke-width="0.22" textLength="5.4" lengthAdjust="spacingAndGlyphs">A</text>
<path d="M238.8,29.2 L240.2,30.6 L241.6,29.2" fill="none" stroke="#2a5a94" stroke-width="1.02"/>
<text x="112.5" y="55.6" font-size="8.4" fill="#1c1c1c" stroke="#1c1c1c" stroke-width="0.22" textLength="4.8" lengthAdjust="spacingAndGlyphs" font-weight="bold">B</text>
<text x="128.6" y="55.6" font-size="8.4" fill="#1c1c1c" stroke="#1c1c1c" stroke-width="0.22" font-style="italic" font-family="'Liberation Serif', serif">I</text>
<text x="141.8" y="55.2" font-size="8.2" fill="#1c1c1c" stroke="#1c1c1c" stroke-width="0.22" textLength="5.6" lengthAdjust="spacingAndGlyphs">U</text>
<line x1="141.6" y1="56.9" x2="147.6" y2="56.9" stroke="#1c1c1c" stroke-width="0.84" />
<path d="M154.0,52.6 L155.6,54.199999999999996 L157.2,52.6" fill="none" stroke="#303030" stroke-width="1.2" stroke-linecap="round" stroke-linejoin="round"/>
<line x1="163.8" y1="47.5" x2="163.8" y2="59.2" stroke="#d4d4d4" stroke-width="1.2" />
<rect x="169.2" y="48.8" width="8.6" height="8.2" fill="none" stroke="#9a9a9a" stroke-width="0.84" stroke-dasharray="1 0.8"/>
<line x1="173.5" y1="48.8" x2="173.5" y2="57" stroke="#9a9a9a" stroke-width="0.84" />
<line x1="169.2" y1="52.9" x2="177.8" y2="52.9" stroke="#9a9a9a" stroke-width="0.84" />
<line x1="168.8" y1="57.3" x2="178.2" y2="57.3" stroke="#333" stroke-width="1.32" />
<path d="M182.9,52.6 L184.5,54.199999999999996 L186.1,52.6" fill="none" stroke="#303030" stroke-width="1.2" stroke-linecap="round" stroke-linejoin="round"/>
<line x1="192.5" y1="47.5" x2="192.5" y2="59.2" stroke="#d4d4d4" stroke-width="1.2" />
<path d="M201.4,50.2 L204.6,53.4 L202,55.4 L199.4,52.8 Z" fill="#fff" stroke="#444" stroke-width="0.96"/>
<path d="M205.6,53 C206.6,54.4 206.6,55.2 205.6,55.4 C204.8,55.2 204.8,54.4 205.6,53 Z" fill="#2f6fc0"/>
<line x1="201.8" y1="48.6" x2="203" y2="51" stroke="#444" stroke-width="0.84" />
<rect x="198.8" y="56.3" width="8.8" height="1.8" fill="#ffe100"/>
<path d="M211.4,52.6 L213,54.199999999999996 L214.6,52.6" fill="none" stroke="#303030" stroke-width="1.2" stroke-linecap="round" stroke-linejoin="round"/>
<text x="223.4" y="55" font-size="8.6" fill="#1c1c1c" stroke="#1c1c1c" stroke-width="0.22" textLength="6" lengthAdjust="spacingAndGlyphs">A</text>
<rect x="222.2" y="56.3" width="8.8" height="1.8" fill="#e0242a"/>
<path d="M235.9,52.6 L237.5,54.199999999999996 L239.1,52.6" fill="none" stroke="#303030" stroke-width="1.2" stroke-linecap="round" stroke-linejoin="round"/>
<line x1="255.5" y1="29.4" x2="264.1" y2="29.4" stroke="#242424" stroke-width="1.2" />
<line x1="256.8" y1="32.0" x2="262.8" y2="32.0" stroke="#242424" stroke-width="1.2" />
<line x1="256.8" y1="34.6" x2="262.8" y2="34.6" stroke="#242424" stroke-width="1.2" />
<line x1="271.8" y1="30.2" x2="277.8" y2="30.2" stroke="#242424" stroke-width="1.2" />
<line x1="270.5" y1="32.8" x2="279.1" y2="32.8" stroke="#242424" stroke-width="1.2" />
<line x1="271.8" y1="35.4" x2="277.8" y2="35.4" stroke="#242424" stroke-width="1.2" />
<rect x="283.2" y="25.9" width="13.8" height="14.8" fill="#d0d0d0" stroke="#9e9e9e" stroke-width="0.96"/>
<line x1="287.1" y1="31.2" x2="293.1" y2="31.2" stroke="#242424" stroke-width="1.2" />
<line x1="287.1" y1="33.8" x2="293.1" y2="33.8" stroke="#242424" stroke-width="1.2" />
<line x1="285.8" y1="36.4" x2="294.40000000000003" y2="36.4" stroke="#242424" stroke-width="1.2" />
<text x="0" y="0" font-size="6.6" fill="#3a3a3a" stroke="#3a3a3a" stroke-width="0.22" transform="translate(305.2,33.6) rotate(-42)">ab</text>
<path d="M306.6,36.4 L312.6,31" fill="none" stroke="#2f6fc0" stroke-width="0.96"/>
<path d="M310.6,30.8 L312.8,30.8 L312.8,33" fill="none" stroke="#2f6fc0" stroke-width="0.96"/>
<path d="M318.0,32.800000000000004 L319.6,34.4 L321.20000000000005,32.800000000000004" fill="none" stroke="#303030" stroke-width="1.2" stroke-linecap="round" stroke-linejoin="round"/>
<line x1="327.5" y1="26" x2="327.5" y2="40" stroke="#d4d4d4" stroke-width="1.2" />
<path d="M334,31.6 L336,33.4 L334,35.2" fill="none" stroke="#2f6fc0" stroke-width="0.96"/>
<text x="337" y="36" font-size="6.8" fill="#3a3a3a" stroke="#3a3a3a" stroke-width="0.22">¶</text>
<path d="M346.7,32.800000000000004 L348.3,34.4 L349.90000000000003,32.800000000000004" fill="none" stroke="#303030" stroke-width="1.2" stroke-linecap="round" stroke-linejoin="round"/>
<line x1="356.3" y1="25" x2="356.3" y2="61" stroke="#d4d4d4" stroke-width="1.2" />
<text x="362.2" y="32.6" font-size="6.6" fill="#1e1e1e" stroke="#1e1e1e" stroke-width="0.3" textLength="7.6" lengthAdjust="spacingAndGlyphs">ab</text>
<text x="362.2" y="37.9" font-size="6.6" fill="#1e1e1e" stroke="#1e1e1e" stroke-width="0.3">c</text>
<path d="M366.6,36.2 L369.8,36.2 C371.2,36.2 371.2,33.6 369.8,33.6" fill="none" stroke="#1f6fc4" stroke-width="1.02"/>
<path d="M368,34.9 L366.6,36.2 L368,37.5" fill="none" stroke="#1f6fc4" stroke-width="1.02"/>
<text x="373.8" y="36.2" font-size="7.8" fill="#1c1c1c" stroke="#1c1c1c" stroke-width="0.22" textLength="31.7" lengthAdjust="spacingAndGlyphs">Wrap Text</text>
<line x1="255.5" y1="49.4" x2="264.1" y2="49.4" stroke="#242424" stroke-width="1.2" />
<line x1="255.5" y1="51.9" x2="261.5" y2="51.9" stroke="#242424" stroke-width="1.2" />
<line x1="255.5" y1="54.4" x2="264.1" y2="54.4" stroke="#242424" stroke-width="1.2" />
<line x1="255.5" y1="56.9" x2="261.5" y2="56.9" stroke="#242424" stroke-width="1.2" />
<line x1="270.5" y1="49.4" x2="279.1" y2="49.4" stroke="#242424" stroke-width="1.2" />
<line x1="271.8" y1="51.9" x2="277.8" y2="51.9" stroke="#242424" stroke-width="1.2" />
<line x1="270.5" y1="54.4" x2="279.1" y2="54.4" stroke="#242424" stroke-width="1.2" />
<line x1="271.8" y1="56.9" x2="277.8" y2="56.9" stroke="#242424" stroke-width="1.2" />
<line x1="285.4" y1="49.4" x2="294.0" y2="49.4" stroke="#242424" stroke-width="1.2" />
<line x1="288.0" y1="51.9" x2="294.0" y2="51.9" stroke="#242424" stroke-width="1.2" />
<line x1="285.4" y1="54.4" x2="294.0" y2="54.4" stroke="#242424" stroke-width="1.2" />
<line x1="288.0" y1="56.9" x2="294.0" y2="56.9" stroke="#242424" stroke-width="1.2" />
<line x1="299.3" y1="47.5" x2="299.3" y2="59.2" stroke="#d4d4d4" stroke-width="1.2" />
<line x1="305" y1="49.6" x2="314" y2="49.6" stroke="#242424" stroke-width="1.2" />
<line x1="309" y1="52.0" x2="314" y2="52.0" stroke="#242424" stroke-width="1.2" />
<line x1="309" y1="54.4" x2="314" y2="54.4" stroke="#242424" stroke-width="1.2" />
<line x1="305" y1="56.8" x2="314" y2="56.8" stroke="#242424" stroke-width="1.2" />
<path d="M308.4,53.2 L305,53.2 M306.4,51.8 L305,53.2 L306.4,54.6" fill="none" stroke="#2f6fc0" stroke-width="0.96"/>
<line x1="320.4" y1="49.6" x2="329.4" y2="49.6" stroke="#242424" stroke-width="1.2" />
<line x1="324.4" y1="52.0" x2="329.4" y2="52.0" stroke="#242424" stroke-width="1.2" />
<line x1="324.4" y1="54.4" x2="329.4" y2="54.4" stroke="#242424" stroke-width="1.2" />
<line x1="320.4" y1="56.8" x2="329.4" y2="56.8" stroke="#242424" stroke-width="1.2" />
<path d="M320.4,53.2 L323.8,53.2 M322.4,51.8 L323.8,53.2 L322.4,54.6" fill="none" stroke="#2f6fc0" stroke-width="0.96"/>
<rect x="361.7" y="48.7" width="9.4" height="8.9" fill="#ffffff" stroke="#222222" stroke-width="1.26"/>
<line x1="366.4" y1="48.7" x2="366.4" y2="51.2" stroke="#222222" stroke-width="0.84" />
<line x1="366.4" y1="55.1" x2="366.4" y2="57.6" stroke="#222222" stroke-width="0.84" />
<rect x="362.3" y="51.2" width="8.2" height="3.9" fill="#d6e8fa" stroke="#1f6fc4" stroke-width="0.72"/>
<path d="M363.6,53.15 L369.2,53.15 M364.7,52.1 L363.6,53.15 L364.7,54.2 M368.1,52.1 L369.2,53.15 L368.1,54.2" fill="none" stroke="#1f6fc4" stroke-width="0.78"/>
<text x="373.8" y="56.2" font-size="7.8" fill="#1c1c1c" stroke="#1c1c1c" stroke-width="0.22" textLength="52.5" lengthAdjust="spacingAndGlyphs">Merge &amp; Center</text>
<path d="M433.4,52.6 L435,54.199999999999996 L436.6,52.6" fill="none" stroke="#303030" stroke-width="1.2" stroke-linecap="round" stroke-linejoin="round"/>
<rect x="450.5" y="26.3" width="87" height="14.4" fill="#ffffff" stroke="#c6c6c6" stroke-width="0.96"/>
<text x="453" y="36.2" font-size="7.8" fill="#1c1c1c" stroke="#1c1c1c" stroke-width="0.22" textLength="24.5" lengthAdjust="spacingAndGlyphs">General</text>
<path d="M532.1999999999999,33.2 L533.8,34.8 L535.4,33.2" fill="none" stroke="#303030" stroke-width="1.2" stroke-linecap="round" stroke-linejoin="round"/>
<text x="454.4" y="57.8" font-size="11.6" fill="#1c1c1c" stroke="#1c1c1c" stroke-width="0.05" textLength="5.8" lengthAdjust="spacingAndGlyphs">$</text>
<path d="M466.7,52.6 L468.3,54.199999999999996 L469.90000000000003,52.6" fill="none" stroke="#303030" stroke-width="1.2" stroke-linecap="round" stroke-linejoin="round"/>
<text x="476.8" y="57.2" font-size="11.2" fill="#1c1c1c" stroke="#1c1c1c" stroke-width="0.05" textLength="9.8" lengthAdjust="spacingAndGlyphs">%</text>
<text x="494.4" y="52.8" font-size="25" fill="#1c1c1c" stroke="#1c1c1c" stroke-width="0.22" textLength="5.2" lengthAdjust="spacingAndGlyphs" font-weight="bold" font-family="'Liberation Serif', serif">,</text>
<line x1="506.3" y1="47.5" x2="506.3" y2="59.2" stroke="#d4d4d4" stroke-width="1.2" />
<path d="M515.2,50.6 L511.4,50.6 M512.9,49.1 L511.4,50.6 L512.9,52.1" fill="none" stroke="#1f6fc4" stroke-width="0.96"/>
<text x="517.4" y="52.9" font-size="6.9" fill="#2a2a2a" stroke="#2a2a2a" stroke-width="0.22" textLength="3.7" lengthAdjust="spacingAndGlyphs">0</text>
<text x="512.2" y="58.4" font-size="6.9" fill="#2a2a2a" stroke="#2a2a2a" stroke-width="0.22" textLength="9" lengthAdjust="spacingAndGlyphs">.00</text>
<text x="527.6" y="52.9" font-size="6.9" fill="#2a2a2a" stroke="#2a2a2a" stroke-width="0.22" textLength="9" lengthAdjust="spacingAndGlyphs">.00</text>
<text x="533" y="58.4" font-size="6.9" fill="#2a2a2a" stroke="#2a2a2a" stroke-width="0.22" textLength="3.7" lengthAdjust="spacingAndGlyphs">0</text>
<path d="M526.4,55.9 L531.4,55.9 M529.9,54.4 L531.4,55.9 L529.9,57.4" fill="none" stroke="#1f6fc4" stroke-width="0.96"/>
<rect x="562.4" y="25.6" width="11.6" height="4.5" fill="#f4868e"/>
<rect x="562.4" y="30.1" width="6.6" height="4.6" fill="#4a90d9"/>
<rect x="569" y="30.1" width="5" height="4.6" fill="#f9b9bf"/>
<rect x="562.4" y="34.7" width="11.6" height="4.5" fill="#f4868e"/>
<rect x="574" y="25.6" width="5.6" height="13.6" fill="#ffffff"/>
<rect x="562.4" y="25.6" width="17.2" height="13.6" fill="none" stroke="#3f3f3f" stroke-width="0.84"/>
<line x1="568.1333333333333" y1="25.6" x2="568.1333333333333" y2="39.2" stroke="#3f3f3f" stroke-width="0.84" />
<line x1="573.8666666666667" y1="25.6" x2="573.8666666666667" y2="39.2" stroke="#3f3f3f" stroke-width="0.84" />
<line x1="562.4" y1="30.133333333333333" x2="579.6" y2="30.133333333333333" stroke="#3f3f3f" stroke-width="0.84" />
<line x1="562.4" y1="34.66666666666667" x2="579.6" y2="34.66666666666667" stroke="#3f3f3f" stroke-width="0.84" />
<line x1="574" y1="25.6" x2="574" y2="39.2" stroke="#3f3f3f" stroke-width="0.84" />
<text x="552" y="51.7" font-size="7.8" fill="#1c1c1c" stroke="#1c1c1c" stroke-width="0.22" textLength="38" lengthAdjust="spacingAndGlyphs">Conditional</text>
<text x="549.5" y="62" font-size="7.8" fill="#1c1c1c" stroke="#1c1c1c" stroke-width="0.22" textLength="36.6" lengthAdjust="spacingAndGlyphs">Formatting</text>
<path d="M588.4,58.6 L590,60.199999999999996 L591.6,58.6" fill="none" stroke="#303030" stroke-width="1.2" stroke-linecap="round" stroke-linejoin="round"/>
<rect x="604" y="25.6" width="17.2" height="13.6" fill="#ffffff" stroke="#3f3f3f" stroke-width="0.84"/>
<line x1="609.7333333333333" y1="25.6" x2="609.7333333333333" y2="39.2" stroke="#3f3f3f" stroke-width="0.84" />
<line x1="615.4666666666667" y1="25.6" x2="615.4666666666667" y2="39.2" stroke="#3f3f3f" stroke-width="0.84" />
<line x1="604" y1="30.133333333333333" x2="621.2" y2="30.133333333333333" stroke="#3f3f3f" stroke-width="0.84" />
<line x1="604" y1="34.66666666666667" x2="621.2" y2="34.66666666666667" stroke="#3f3f3f" stroke-width="0.84" />
<rect x="609.7" y="30.1" width="11.5" height="9.1" fill="#8fc0ee"/>
<rect x="604" y="25.6" width="17.2" height="13.6" fill="none" stroke="#3f3f3f" stroke-width="0.84"/>
<line x1="609.7333333333333" y1="25.6" x2="609.7333333333333" y2="39.2" stroke="#3f3f3f" stroke-width="0.84" />
<line x1="615.4666666666667" y1="25.6" x2="615.4666666666667" y2="39.2" stroke="#3f3f3f" stroke-width="0.84" />
<line x1="604" y1="30.133333333333333" x2="621.2" y2="30.133333333333333" stroke="#3f3f3f" stroke-width="0.84" />
<line x1="604" y1="34.66666666666667" x2="621.2" y2="34.66666666666667" stroke="#3f3f3f" stroke-width="0.84" />
<line x1="621.2" y1="30.8" x2="615.2" y2="37.2" stroke="#3c4a5c" stroke-width="3.6" stroke-linecap="round"/>
<line x1="621.2" y1="30.8" x2="615.2" y2="37.2" stroke="#f4f7fb" stroke-width="1.8" stroke-linecap="round"/>
<path d="M613.7,36.1 L616.3000000000001,38.7 C614.8000000000001,40.800000000000004 611.2,41.6 609.8000000000001,41.6 C611.0,40.4 610.8000000000001,38.8 613.7,36.1 Z" fill="#2b7cd3"/>
<text x="596.8" y="51.7" font-size="7.8" fill="#1c1c1c" stroke="#1c1c1c" stroke-width="0.22" textLength="32" lengthAdjust="spacingAndGlyphs">Format as</text>
<text x="601.3" y="62" font-size="7.8" fill="#1c1c1c" stroke="#1c1c1c" stroke-width="0.22" textLength="16.2" lengthAdjust="spacingAndGlyphs">Table</text>
<path d="M620.1999999999999,58.6 L621.8,60.199999999999996 L623.4,58.6" fill="none" stroke="#303030" stroke-width="1.2" stroke-linecap="round" stroke-linejoin="round"/>
<rect x="636.6" y="25.6" width="17.2" height="13.6" fill="#ffffff" stroke="#3f3f3f" stroke-width="0.84"/>
<line x1="642.3333333333334" y1="25.6" x2="642.3333333333334" y2="39.2" stroke="#3f3f3f" stroke-width="0.84" />
<line x1="648.0666666666667" y1="25.6" x2="648.0666666666667" y2="39.2" stroke="#3f3f3f" stroke-width="0.84" />
<line x1="636.6" y1="30.133333333333333" x2="653.8000000000001" y2="30.133333333333333" stroke="#3f3f3f" stroke-width="0.84" />
<line x1="636.6" y1="34.66666666666667" x2="653.8000000000001" y2="34.66666666666667" stroke="#3f3f3f" stroke-width="0.84" />
<rect x="640" y="27.6" width="11.4" height="7.8" fill="#8fc0ee" stroke="#2b7cd3" stroke-width="0.72"/>
<line x1="653.8" y1="30.8" x2="647.8" y2="37.2" stroke="#3c4a5c" stroke-width="3.6" stroke-linecap="round"/>
<line x1="653.8" y1="30.8" x2="647.8" y2="37.2" stroke="#f4f7fb" stroke-width="1.8" stroke-linecap="round"/>
<path d="M646.3,36.1 L648.9,38.7 C647.4,40.800000000000004 643.8000000000001,41.6 642.4000000000001,41.6 C643.6,40.4 643.4000000000001,38.8 646.3,36.1 Z" fill="#2b7cd3"/>
<text x="639.3" y="51.7" font-size="7.8" fill="#1c1c1c" stroke="#1c1c1c" stroke-width="0.22" textLength="11.5" lengthAdjust="spacingAndGlyphs">Cell</text>
<text x="632" y="62" font-size="7.8" fill="#1c1c1c" stroke="#1c1c1c" stroke-width="0.22" textLength="19.3" lengthAdjust="spacingAndGlyphs">Styles</text>
<path d="M653.4,58.6 L655,60.199999999999996 L656.6,58.6" fill="none" stroke="#303030" stroke-width="1.2" stroke-linecap="round" stroke-linejoin="round"/>
<rect x="673.4" y="25.6" width="18" height="13.6" fill="#ffffff" stroke="#3f3f3f" stroke-width="0.84"/>
<line x1="679.4" y1="25.6" x2="679.4" y2="39.2" stroke="#3f3f3f" stroke-width="0.84" />
<line x1="685.4" y1="25.6" x2="685.4" y2="39.2" stroke="#3f3f3f" stroke-width="0.84" />
<line x1="673.4" y1="30.133333333333333" x2="691.4" y2="30.133333333333333" stroke="#3f3f3f" stroke-width="0.84" />
<line x1="673.4" y1="34.66666666666667" x2="691.4" y2="34.66666666666667" stroke="#3f3f3f" stroke-width="0.84" />
<rect x="677" y="30.2" width="14.4" height="4.4" fill="#9cc6ee" stroke="#2f6fc0" stroke-width="0.72"/>
<path d="M672.2,32.4 L675.8,28.8 L675.8,31 L681,31 L681,33.8 L675.8,33.8 L675.8,36 Z" fill="#eef5fc" stroke="#2b7cd3" stroke-width="0.96"/>
<text x="673.3" y="51.7" font-size="7.8" fill="#1c1c1c" stroke="#1c1c1c" stroke-width="0.22" textLength="17.5" lengthAdjust="spacingAndGlyphs">Insert</text>
<path d="M680.4,58.6 L682,60.199999999999996 L683.6,58.6" fill="none" stroke="#303030" stroke-width="1.2" stroke-linecap="round" stroke-linejoin="round"/>
<rect x="700.4" y="25.6" width="18" height="13.6" fill="#ffffff" stroke="#3f3f3f" stroke-width="0.84"/>
<line x1="706.4" y1="25.6" x2="706.4" y2="39.2" stroke="#3f3f3f" stroke-width="0.84" />
<line x1="712.4" y1="25.6" x2="712.4" y2="39.2" stroke="#3f3f3f" stroke-width="0.84" />
<line x1="700.4" y1="30.133333333333333" x2="718.4" y2="30.133333333333333" stroke="#3f3f3f" stroke-width="0.84" />
<line x1="700.4" y1="34.66666666666667" x2="718.4" y2="34.66666666666667" stroke="#3f3f3f" stroke-width="0.84" />
<rect x="700.4" y="30.2" width="10" height="4.4" fill="#9cc6ee" stroke="#2f6fc0" stroke-width="0.72"/>
<path d="M711.6,29.4 L717.6,35.4 M717.6,29.4 L711.6,35.4" fill="none" stroke="#e0444a" stroke-width="1.08"/>
<text x="698.8" y="51.7" font-size="7.8" fill="#1c1c1c" stroke="#1c1c1c" stroke-width="0.22" textLength="20" lengthAdjust="spacingAndGlyphs">Delete</text>
<path d="M707.1999999999999,58.6 L708.8,60.199999999999996 L710.4,58.6" fill="none" stroke="#303030" stroke-width="1.2" stroke-linecap="round" stroke-linejoin="round"/>
<rect x="726.6" y="27.4" width="17" height="11.8" fill="#ffffff" stroke="#3f3f3f" stroke-width="0.84"/>
<line x1="732.2666666666667" y1="27.4" x2="732.2666666666667" y2="39.2" stroke="#3f3f3f" stroke-width="0.84" />
<line x1="737.9333333333334" y1="27.4" x2="737.9333333333334" y2="39.2" stroke="#3f3f3f" stroke-width="0.84" />
<line x1="726.6" y1="31.333333333333332" x2="743.6" y2="31.333333333333332" stroke="#3f3f3f" stroke-width="0.84" />
<line x1="726.6" y1="35.266666666666666" x2="743.6" y2="35.266666666666666" stroke="#3f3f3f" stroke-width="0.84" />
<rect x="726.6" y="31.4" width="17" height="3.8" fill="#9cc6ee" stroke="#2f6fc0" stroke-width="0.72"/>
<path d="M728,23.4 L742.2,23.4 M728,22.2 L728,24.6 M742.2,22.2 L742.2,24.6" fill="none" stroke="#2f6fc0" stroke-width="0.84"/>
<text x="723.8" y="51.7" font-size="7.8" fill="#1c1c1c" stroke="#1c1c1c" stroke-width="0.22" textLength="22.5" lengthAdjust="spacingAndGlyphs">Format</text>
<path d="M733.4,58.6 L735,60.199999999999996 L736.6,58.6" fill="none" stroke="#303030" stroke-width="1.2" stroke-linecap="round" stroke-linejoin="round"/>
<path d="M768.4,25.4 L768.4,24.2 L761.6,24.2 L765.2,28.2 L761.6,32.2 L768.4,32.2 L768.4,31" fill="none" stroke="#3a3a3a" stroke-width="1.08"/>
<text x="772.5" y="30.5" font-size="7.8" fill="#1c1c1c" stroke="#1c1c1c" stroke-width="0.22" textLength="30.5" lengthAdjust="spacingAndGlyphs">AutoSum</text>
<path d="M810.9,26.599999999999998 L812.5,28.2 L814.1,26.599999999999998" fill="none" stroke="#303030" stroke-width="1.2" stroke-linecap="round" stroke-linejoin="round"/>
<rect x="761" y="38" width="9.4" height="8" fill="#ffffff" stroke="#3a3a3a" stroke-width="0.96"/>
<path d="M765.7,39.6 L765.7,44 M764,42.4 L765.7,44.2 L767.4,42.4" fill="none" stroke="#2f6fc0" stroke-width="0.96"/>
<text x="773" y="45" font-size="7.8" fill="#1c1c1c" stroke="#1c1c1c" stroke-width="0.22" textLength="9" lengthAdjust="spacingAndGlyphs">Fill</text>
<path d="M784.6999999999999,41.6 L786.3,43.199999999999996 L787.9,41.6" fill="none" stroke="#303030" stroke-width="1.2" stroke-linecap="round" stroke-linejoin="round"/>
<g transform="translate(765.6,56.3) rotate(-42)"><rect x="-4.4" y="-2.4" width="8.8" height="4.8" rx="0.6" fill="#fdf7fe" stroke="#a03cb4" stroke-width="1.05"/><line x1="-1.2" y1="-2.4" x2="-1.2" y2="2.4" stroke="#a03cb4" stroke-width="0.9"/></g>
<text x="773" y="59.5" font-size="7.8" fill="#1c1c1c" stroke="#1c1c1c" stroke-width="0.22" textLength="15.8" lengthAdjust="spacingAndGlyphs">Clear</text>
<path d="M792.1999999999999,56.0 L793.8,57.599999999999994 L795.4,56.0" fill="none" stroke="#303030" stroke-width="1.2" stroke-linecap="round" stroke-linejoin="round"/>
<text x="822.8" y="31.7" font-size="10" fill="#2b7cd3" stroke="#2b7cd3" stroke-width="0.05" textLength="6.6" lengthAdjust="spacingAndGlyphs">A</text>
<text x="823.2" y="40.8" font-size="10" fill="#2a2a2a" stroke="#2a2a2a" stroke-width="0.05" textLength="5.8" lengthAdjust="spacingAndGlyphs">Z</text>
<path d="M830.6,28.6 L840,28.6 L836.4,33 L836.4,37.2 L834.2,37.2 L834.2,33 Z" fill="#dcdcdc" stroke="#2e2e2e" stroke-width="1.14"/>
<text x="821.3" y="51.7" font-size="7.8" fill="#1c1c1c" stroke="#1c1c1c" stroke-width="0.22" textLength="20" lengthAdjust="spacingAndGlyphs">Sort &amp;</text>
<text x="820" y="62" font-size="7.8" fill="#1c1c1c" stroke="#1c1c1c" stroke-width="0.22" textLength="16.2" lengthAdjust="spacingAndGlyphs">Filter</text>
<path d="M838.4,58.6 L840,60.199999999999996 L841.6,58.6" fill="none" stroke="#303030" stroke-width="1.2" stroke-linecap="round" stroke-linejoin="round"/>
<circle cx="860.6" cy="30.4" r="5.8" fill="none" stroke="#3a3a3a" stroke-width="0.9"/>
<line x1="856.4" y1="34.6" x2="849.4" y2="41.4" stroke="#3a3a3a" stroke-width="1.08" />
<text x="847.5" y="51.7" font-size="7.8" fill="#1c1c1c" stroke="#1c1c1c" stroke-width="0.22" textLength="22.5" lengthAdjust="spacingAndGlyphs">Find &amp;</text>
<text x="845.8" y="62" font-size="7.8" fill="#1c1c1c" stroke="#1c1c1c" stroke-width="0.22" textLength="19.2" lengthAdjust="spacingAndGlyphs">Select</text>
<path d="M867.1999999999999,58.6 L868.8,60.199999999999996 L870.4,58.6" fill="none" stroke="#303030" stroke-width="1.2" stroke-linecap="round" stroke-linejoin="round"/>
<rect x="3" y="86" width="63.6" height="15.2" fill="#ffffff" stroke="#c6c6c6" stroke-width="0.9"/>
<text x="8" y="97" font-size="7.8" fill="#1c1c1c" stroke="#1c1c1c" stroke-width="0.22" textLength="13.8" lengthAdjust="spacingAndGlyphs">O23</text>
<path d="M58.2,92.8 L62,92.8 L60.1,95 Z" fill="#444"/>
<rect x="75.6" y="91.2" width="1" height="1" fill="#8a8a8a"/>
<rect x="75.6" y="93.7" width="1" height="1" fill="#8a8a8a"/>
<rect x="75.6" y="96.2" width="1" height="1" fill="#8a8a8a"/>
<rect x="85.6" y="86" width="68.4" height="15.2" fill="#ffffff" stroke="#c6c6c6" stroke-width="0.9"/>
<path d="M94.6,91.6 L99.8,96.8 M99.8,91.6 L94.6,96.8" fill="none" stroke="#a2a2a2" stroke-width="1.1"/>
<path d="M116.4,94.4 L118.8,96.8 L123.2,91.4" fill="none" stroke="#a2a2a2" stroke-width="1.1"/>
<text x="139.4" y="97" font-size="8.6" fill="#3a3a3a" stroke="#3a3a3a" stroke-width="0.22" font-style="italic" font-family="'Liberation Serif', serif">f</text>
<text x="142.6" y="97.4" font-size="5.4" fill="#3a3a3a" stroke="#3a3a3a" stroke-width="0.22" font-style="italic" font-family="'Liberation Serif', serif">x</text>
<rect x="156.6" y="86" width="840.6" height="15.2" fill="#ffffff" stroke="#c6c6c6" stroke-width="0.9"/>
<path d="M989.5,92.64999999999999 L991.4,94.55 L993.3,92.64999999999999" fill="none" stroke="#222" stroke-width="1.35" stroke-linecap="round" stroke-linejoin="round"/>
<rect x="987" y="107" width="13" height="379.5" fill="#e6e6e6"/>
<rect x="989.4" y="109.6" width="8.2" height="376.9" fill="#ffffff" stroke="#c8c8c8" stroke-width="0.8"/>
<rect x="989.4" y="460" width="8.2" height="16" fill="#c8c8c8"/>
<rect x="989.4" y="109.6" width="8.2" height="8.8" fill="#ffffff" stroke="#ababab" stroke-width="0.8"/>
<path d="M991.2,115.4 L995.8,115.4 L993.5,112.4 Z" fill="#333"/>
<rect x="989.4" y="476" width="8.2" height="9.5" fill="#ffffff" stroke="#ababab" stroke-width="0.8"/>
<path d="M991.2,479.4 L995.8,479.4 L993.5,482.4 Z" fill="#444"/>
<rect x="0" y="486.0" width="1000" height="18" fill="#e3e3e3"/>
<line x1="0" y1="485.5" x2="987" y2="485.5" stroke="#8e8e8e" stroke-width="1.0" />
<rect x="62.5" y="484.5" width="40.5" height="15.5" fill="#ffffff"/>
<line x1="62.5" y1="485.5" x2="62.5" y2="500.4" stroke="#6e6e6e" stroke-width="1.0" />
<line x1="103" y1="485.5" x2="103" y2="500.4" stroke="#6e6e6e" stroke-width="1.0" />
<line x1="62" y1="500.3" x2="103.5" y2="500.3" stroke="#17402a" stroke-width="1.3" />
<text x="70" y="496.8" font-size="9.0" fill="#1a5c38" stroke="#1a5c38" stroke-width="0.1" textLength="25.2" lengthAdjust="spacingAndGlyphs" font-weight="bold">Sheet3</text>
<path d="M19.2,491.2 L16.8,493.5 L19.2,495.8 Z" fill="#c0c0c0"/>
<path d="M35.2,491.2 L37.6,493.5 L35.2,495.8 Z" fill="#c0c0c0"/>
<circle cx="128.8" cy="494.2" r="4.7" fill="#f4f4f4" stroke="#6a6a6a" stroke-width="0.9"/>
<line x1="126" y1="494.2" x2="131.6" y2="494.2" stroke="#4a4a4a" stroke-width="1.3" />
<line x1="128.8" y1="491.4" x2="128.8" y2="497" stroke="#4a4a4a" stroke-width="1.3" />
<rect x="600" y="491.5" width="1" height="1" fill="#8a8a8a"/>
<rect x="600" y="494" width="1" height="1" fill="#8a8a8a"/>
<rect x="600" y="496.5" width="1" height="1" fill="#8a8a8a"/>
<rect x="610.5" y="490" width="376" height="8.6" fill="#c8c8c8"/>
<rect x="610.5" y="490" width="9" height="8.6" fill="#ffffff" stroke="#ababab" stroke-width="0.8"/>
<path d="M616.2,492 L616.2,496.6 L613.4,494.3 Z" fill="#444"/>
<rect x="621" y="490" width="338.5" height="8.6" fill="#ffffff" stroke="#b5b5b5" stroke-width="0.8"/>
<rect x="977.6" y="490" width="9" height="8.6" fill="#ffffff" stroke="#ababab" stroke-width="0.8"/>
<path d="M981,492 L981,496.6 L983.8,494.3 Z" fill="#444"/>
<rect x="0" y="503.4" width="1000" height="9" fill="#f3f2f1"/>
<text x="4.6" y="513.6" font-size="7.6" fill="#333" stroke="#333" stroke-width="0.22" textLength="19" lengthAdjust="spacingAndGlyphs">Ready</text>
<rect x="813.6" y="503.4" width="23.4" height="8" fill="#c8c8c8"/>
<rect x="820.5" y="505.5" width="9" height="8" fill="none" stroke="#333" stroke-width="0.9"/>
<line x1="820.5" y1="508.5" x2="829.5" y2="508.5" stroke="#333" stroke-width="0.8" />
<line x1="824.0" y1="505.5" x2="824.0" y2="513.5" stroke="#333" stroke-width="0.8" />
<line x1="827.0" y1="508.5" x2="827.0" y2="513.5" stroke="#333" stroke-width="0.8" />
<rect x="845.5" y="505.5" width="8" height="8" fill="none" stroke="#555" stroke-width="0.9"/>
<rect x="847.5" y="507.5" width="4" height="5" fill="none" stroke="#555" stroke-width="0.8"/>
<rect x="871" y="505.5" width="8.5" height="8" fill="none" stroke="#555" stroke-width="0.9"/>
<line x1="875.2" y1="505.5" x2="875.2" y2="510" stroke="#555" stroke-width="0.8" />
<line x1="891.5" y1="509.8" x2="895.5" y2="509.8" stroke="#333" stroke-width="0.9" />
<line x1="899" y1="509.8" x2="961" y2="509.8" stroke="#9a9a9a" stroke-width="0.8" />
<rect x="931.2" y="507" width="1.8" height="5" fill="#555"/>
<line x1="965" y1="509.8" x2="969.5" y2="509.8" stroke="#333" stroke-width="0.9" />
<line x1="967.2" y1="507.5" x2="967.2" y2="512" stroke="#333" stroke-width="0.9" />
<text x="979" y="512.8" font-size="7.6" fill="#333" stroke="#333" stroke-width="0.22" textLength="15.5" lengthAdjust="spacingAndGlyphs">120%</text>
</svg>
</body></html>
